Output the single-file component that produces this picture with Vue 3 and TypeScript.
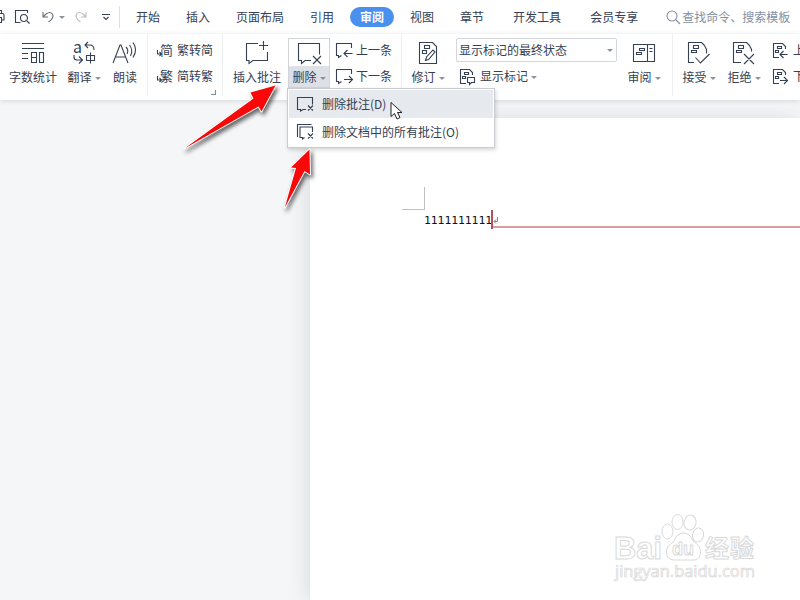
<script setup lang="ts">
import { h } from 'vue'

interface Shape { w: number; h: number; d: string; text?: { x: number; y: number; size: number; value: string }[] }

const icons: Record<string, Shape> = {
  print: { w: 5, h: 14, d: 'M0 3.500h2.500q1.500 0 1.500 1.500v5h-2M0 .5h1.500v3M0 7.500h1.500v5H0' },
  preview: { w: 15, h: 14, d: 'M12.500 3V.5H.5v12h5M12 11l2.500 2.500M12.500 8a3.500 3.500 0 1 1-7 0a3.500 3.500 0 1 1 7 0' },
  undo: { w: 12, h: 12, d: 'M1 1v5h5M1 6l3-3q4-3 6.500 0q2 4-4 8' },
  redo: { w: 12, h: 12, d: 'M11 1v5h-5M11 6l-3-3q-4-3-6.500 0q-2 4 4 8' },
  more: { w: 8, h: 8, d: 'M0 1.500h8M1.500 4l2.500 2.500l2.500-2.500' },
  search: { w: 15, h: 15, d: 'M11 6a5 5 0 1 1-10 0a5 5 0 1 1 10 0M10 10l4 4' },
  count: { w: 24, h: 24, d: 'M1 2.500h22M1 7.500h22M1 12.500h6M1 17.500h6M10.500 11.500h5v10h-5zM10.500 16.500h5M18.500 11.500h4v10h-4z' },
  translate: {
    w: 24, h: 24, d: 'M16 1l-3 3l3 3M13 4h5q4 0 4 5M2 14v2q0 3 3 3h5M7 15.500l3.500 3.500l-3.500 3.500M14.500 14.500h8v5h-8zM18.500 11.500v11',
    text: [{ x: 1, y: 12, size: 16, value: 'a' }],
  },
  read: { w: 26, h: 24, d: 'M1 22L8 4h1l7 18M4 16h10M14 6q3 3 1 7M17.500 4q4 5 1 11M21 1.500q5 7 0 15' },
  toSimple: { w: 17, h: 17, d: 'M.5 8v4h4M2.500 10l2 2l-2 2', text: [{ x: 3, y: 13, size: 13, value: '简' }] },
  toTrad: { w: 17, h: 17, d: 'M.5 8v4h4M2.500 10l2 2l-2 2', text: [{ x: 3, y: 13, size: 13, value: '繁' }] },
  insert: { w: 24, h: 24, d: 'M13 2.500H1.500v17H4v3l4-3h14.500V11M18.500 0v9M14 4.500h9' },
  remove: { w: 24, h: 24, d: 'M10 19.500h-2l-3.500 3v-3h-3v-17h21v11M10 19.500h4M16 15l8 8M24 15l-8 8' },
  prev: { w: 17, h: 17, d: 'M15.500 6V1.500h-15v12h2v2l3-2M16.500 11.500h-8M11.500 8l-3.500 3.500l3.500 3.500' },
  next: { w: 17, h: 17, d: 'M15.500 6V1.500h-15v12h2v2l3-2M8 11.500h8M13 8l3.500 3.500l-3.500 3.500' },
  revise: { w: 20, h: 24, d: 'M1.500 1.500h13l4 4v17h-17zM6.500 4.500h5v3h-5zM4.500 9.500h4v3h-4zM7.500 19.500l1-3.500l6.500-7l2 2l-6.500 7.500z' },
  marks: { w: 17, h: 17, d: 'M7 15.500H1.500v-14h9l3 3V7M5.500 4.500h4v2h-4zM3.500 8.500h3v2h-3zM8.500 9.500h7v5h-3l-2 2v-2h-2z' },
  pane: { w: 24, h: 22, d: 'M1.500 2.500h21v17h-21zM15.500 2.500v17M17.500 6.500h3M17.500 9.500h3M7.500 6.500h5v2h-5zM4.500 10.500h5v2h-5z' },
  accept: { w: 24, h: 24, d: 'M7 21.500H1.500v-20h13q4 3 5 7v4M6.500 4.500h5v3h-5zM4.500 9.500h5v2h-5zM8.500 16.500l5 5.500l9-9' },
  reject: { w: 24, h: 24, d: 'M9 21.500H1.500v-20h13q4 3 5 7v2M6.500 4.500h5v3h-5zM4.500 9.500h5v2h-5zM12 13l10 10M22 13l-10 10' },
  prevRev: { w: 17, h: 17, d: 'M6 15.500H.5v-14h9l3 3V7M4.500 4.500h4v2h-4zM2.500 8.500h3v2h-3zM14.500 12.500h-7M10.500 9l-3.500 3.500l3.500 3.500' },
  nextRev: { w: 17, h: 17, d: 'M6 15.500H.5v-14h9l3 3V7M4.500 4.500h4v2h-4zM2.500 8.500h3v2h-3zM7 12.500h7M11 9l3.500 3.500l-3.500 3.500' },
  del: { w: 17, h: 16, d: 'M6 13.500l-2.500 1.500v-1.500h-3v-12h15v7M6 13.500h3M11 9.500l5 5M16 9.500l-5 5' },
  delAll: { w: 17, h: 16, d: 'M.5 13V.5h14M7.500 13.500l-2 1.500v-1.500h-2.500v-10.500h12.500v5M11 9.500l5 5M16 9.500l-5 5' },
  corner: { w: 6, h: 6, d: 'M4.500 0v4.500h-4.500' },
}

const Icon = (props: { name: string }) => {
  const s = icons[props.name]
  return h('svg', { class: 'icon', width: s.w, height: s.h, viewBox: `0 0 ${s.w} ${s.h}`, overflow: 'visible' }, [
    h('path', { d: s.d, fill: 'none', stroke: 'currentColor', 'stroke-width': 1.1 }),
    ...(s.text ?? []).map(t => h('text', { x: t.x, y: t.y, 'font-size': t.size, fill: 'currentColor' }, t.value)),
  ])
}
Icon.props = ['name']

const tabs = ['开始', '插入', '页面布局', '引用', '审阅', '视图', '章节', '开发工具', '会员专享']
</script>

<template>
  <div class="window">
    <header class="topbar">
      <div class="quick">
        <Icon name="print" />
        <Icon name="preview" class="q-preview" />
        <Icon name="undo" class="q-undo" />
        <i class="caret" />
        <Icon name="redo" class="q-redo" />
        <Icon name="more" class="q-more" />
      </div>
      <nav class="tabs">
        <span v-for="t in tabs" :key="t" class="tab" :class="{ active: t === '审阅', wide: t.length === 4 && t !== '页面布局' }">{{ t }}</span>
      </nav>
      <div class="search"><Icon name="search" /><span>查找命令、搜索模板</span></div>
    </header>

    <section class="ribbon">
      <div class="group g-proof">
        <div class="big count"><Icon name="count" /><span>字数统计</span></div>
        <div class="big"><Icon name="translate" /><span>翻译<i class="caret" /></span></div>
        <div class="big read"><Icon name="read" /><span>朗读</span></div>
      </div>
      <div class="group g-convert">
        <div class="stack">
          <div class="small"><Icon name="toSimple" /><span>繁转简</span></div>
          <div class="small"><Icon name="toTrad" /><span>简转繁</span></div>
        </div>
        <Icon name="corner" class="launcher" />
      </div>
      <div class="group g-comment">
        <div class="big insert"><Icon name="insert" /><span>插入批注</span></div>
        <div class="big delete"><Icon name="remove" /><span>删除<i class="caret" /></span></div>
        <div class="stack">
          <div class="small"><Icon name="prev" /><span>上一条</span></div>
          <div class="small"><Icon name="next" /><span>下一条</span></div>
        </div>
      </div>
      <div class="group g-track">
        <div class="big"><Icon name="revise" /><span>修订<i class="caret" /></span></div>
        <div class="stack markup">
          <div class="combo"><span>显示标记的最终状态</span><i class="caret" /></div>
          <div class="small"><Icon name="marks" /><span>显示标记<i class="caret" /></span></div>
        </div>
        <div class="big"><Icon name="pane" /><span>审阅<i class="caret" /></span></div>
      </div>
      <div class="group g-change">
        <div class="big"><Icon name="accept" /><span>接受<i class="caret" /></span></div>
        <div class="big reject"><Icon name="reject" /><span>拒绝<i class="caret" /></span></div>
        <div class="stack">
          <div class="small"><Icon name="prevRev" /><span>上一条</span></div>
          <div class="small"><Icon name="nextRev" /><span>下一条</span></div>
        </div>
      </div>
    </section>

    <main class="workspace">
      <article class="page">
        <div class="crop-mark" />
        <div class="line">
          <span class="typed">1111111111</span>
          <span class="cursor" />
          <span class="leader">
            <svg width="6" height="8" viewBox="0 0 6 8"><path d="M4.500 0v4.500H1M3 2.500L1 4.500l2 2" fill="none" stroke="#888" /></svg>
          </span>
        </div>
      </article>
    </main>

    <div class="menu">
      <div class="item hover"><Icon name="del" /><span>删除批注(D)</span></div>
      <div class="item"><Icon name="delAll" /><span>删除文档中的所有批注(O)</span></div>
    </div>

    <svg class="overlay" width="800" height="600" viewBox="0 0 800 600">
      <g class="arrows">
        <path d="M184.500 148.500L253.500 98.500L250.500 92.500L275.500 85.500L261.500 111.500L258.500 106.500Z" />
        <path d="M284.800 207.500L296 168L291 167.500L309.500 149.500L310 174.500L304.500 171Z" />
      </g>
      <path class="pointer" d="M391 102.500v14l3.500-3l2.500 5.500l3-1.500l-2.500-5h4.500z" />
      <g class="watermark">
        <ellipse cx="667.500" cy="531.500" rx="5.500" ry="7.500" />
        <ellipse cx="677.500" cy="522" rx="5.500" ry="7.500" />
        <ellipse cx="690" cy="522.500" rx="6" ry="7.500" transform="rotate(12 690 522.500)" />
        <ellipse cx="698" cy="535" rx="5.500" ry="7" transform="rotate(15 698 535)" />
        <path d="M683 533q7 0 10 8q8 5 7.500 12q-1 8-9 7h-17q-8 0-8-8q0-6 7-10q3-9 9.500-9z" />
        <text class="brand" x="614" y="559" font-size="32" textLength="48" lengthAdjust="spacingAndGlyphs">Bai</text>
        <text class="brand" x="672" y="555" font-size="19" textLength="22" lengthAdjust="spacingAndGlyphs">du</text>
        <text class="brand cjk" x="705" y="557" font-size="24" textLength="49">经验</text>
        <text class="site" x="615" y="577" font-size="15.500" textLength="140" lengthAdjust="spacingAndGlyphs">jingyan.baidu.com</text>
      </g>
    </svg>
  </div>
</template>

<style>
body { margin: 0; overflow: hidden; }
</style>

<style scoped>
.window {
  position: relative;
  width: 800px;
  height: 600px;
  overflow: hidden;
  display: flex;
  flex-direction: column;
  background: #f5f6f8;
  color: #354052;
  font: 12px/18px "Noto Sans CJK SC", sans-serif;
  white-space: nowrap;
}
.icon { display: block; flex: none; }
.caret {
  display: inline-block;
  flex: none;
  width: 0;
  height: 0;
  border: 3px solid transparent;
  border-top-color: #8b929d;
  border-bottom: 0;
}
span > .caret { margin-left: 3px; vertical-align: 2px; }

.topbar { display: flex; align-items: center; height: 34px; flex: none; background: #fff; }
.quick { display: flex; align-items: center; width: 119px; height: 22px; border-right: 1px solid #dcdfe4; flex: none; }
.q-preview { margin-left: 10px; }
.q-undo { margin: 0 5px 0 12px; color: #68717e; }
.q-redo { margin-left: 10px; color: #b8bec7; }
.q-more { margin-left: 15px; }
.tabs { display: flex; gap: 16px; margin-left: 11px; }
.tab { padding: 0 5px; height: 20px; line-height: 20px; }
.tab.wide { margin-left: 3px; }
.tab.active { margin: 0 -5px; padding: 0 10px; border-radius: 10px; background: #4a90ee; color: #fff; font-weight: 700; }
.search { display: flex; align-items: center; margin-left: 23px; color: #8490a4; gap: 1px; }

.ribbon { display: flex; height: 66px; flex: none; background: #fff; box-shadow: 0 1px 5px rgba(60, 70, 90, .18); z-index: 1; }
.group { display: flex; height: 62px; box-sizing: border-box; border-right: 1px solid #edeff2; flex: none; }
.big { display: flex; flex-direction: column; align-items: center; width: 32px; flex: none; }
.big > .icon { margin: 7px 0; height: 24px; }
.big > span { line-height: 18px; margin-top: -4px; }
.stack { display: flex; flex-direction: column; flex: none; padding-top: 3px; }
.small { display: flex; align-items: center; height: 26px; gap: 3px; }
.g-proof { width: 148px; padding-left: 9px; }
.count { width: 48px; margin-right: 11px; }
.read { width: 24px; margin-left: 13px; }
.g-convert { width: 75px; padding-left: 9px; }
.launcher { align-self: flex-end; margin-left: -2px; color: #858c97; }
.g-comment { width: 179px; padding-left: 10px; }
.insert { width: 48px; }
.delete {
  width: 42px;
  height: 50px;
  margin: 4px 6px 0 7px;
  box-sizing: border-box;
  border: 1px solid #d0d5db;
  background: linear-gradient(#fff 27px, #dde1e7 27px);
}
.delete > .icon { margin: 2px 0 7px; }
.g-track { width: 271px; padding-left: 10px; }
.markup { width: 161px; margin: 0 11px 0 12px; padding-top: 4px; }
.combo {
  display: flex;
  align-items: center;
  justify-content: space-between;
  box-sizing: border-box;
  height: 24px;
  margin-bottom: 1px;
  padding: 0 3px 0 2px;
  border: 1px solid #d3d7dd;
  border-radius: 2px;
}
.markup .small { padding-left: 3px; gap: 4px; }
.g-change { padding-left: 10px; border: 0; }
.reject { margin: 0 13px; }

.workspace { flex: 1; padding: 18px 0 0 310px; display: flex; min-height: 0; }
.page { flex: 1; padding: 69px 0 0 92px; background: #fff; box-shadow: -3px 0 18px rgba(70, 80, 95, .15); }
.crop-mark { width: 22px; height: 22px; border: solid #bfc3bf; border-width: 0 1px 1px 0; }
.line { display: flex; align-items: flex-start; padding-left: 22px; height: 20px; }
.typed { width: 67px; flex: none; font: 11.3px/21px "DejaVu Sans Mono", monospace; color: #111; }
.cursor { width: 2px; height: 19px; background: #b94f5c; }
.leader { flex: 1; height: 16px; border-bottom: 2px solid #dc9b9c; }
.leader svg { display: block; margin-top: 7px; }

.menu {
  position: absolute;
  left: 287px;
  top: 88px;
  z-index: 2;
  width: 208px;
  height: 60px;
  box-sizing: border-box;
  padding: 1px;
  border: 1px solid #c9cdd2;
  background: #fff;
  box-shadow: 1px 2px 4px rgba(0, 0, 0, .16);
}
.item { display: flex; align-items: center; gap: 8px; height: 28px; padding-left: 8px; }
.item.hover { background: #e6e9ee; }

.overlay { position: absolute; left: 0; top: 0; z-index: 3; }
.arrows {
  fill: #f80808;
  stroke: #fff;
  stroke-width: 2;
  stroke-linejoin: round;
  paint-order: stroke;
  filter: drop-shadow(2px 3px 2px rgba(0, 0, 0, .6));
}
.pointer { fill: #fff; stroke: #222; stroke-width: 1; }
.watermark { fill: #fff; stroke: #d9d9d9; stroke-width: 1; }
.brand { font-family: "Liberation Sans", sans-serif; font-weight: 700; }
.cjk { font-family: "Noto Sans CJK SC", sans-serif; }
.site { font-family: "Open Sans", sans-serif; stroke-width: .7; }
</style>
